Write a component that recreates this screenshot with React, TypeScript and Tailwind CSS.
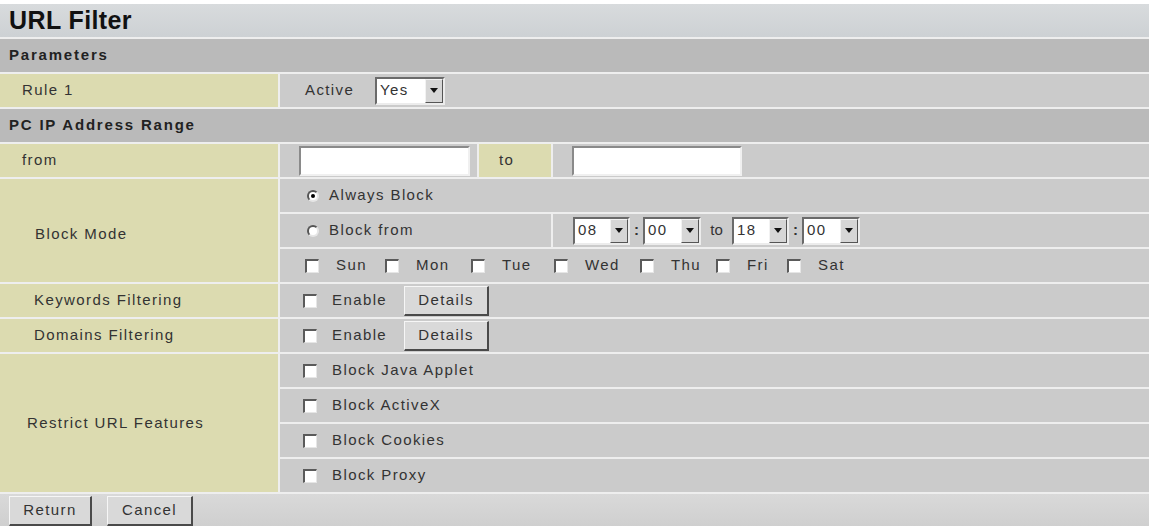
import React from 'react';

const Checkbox = () => (
  <span className="inline-block w-[14px] h-[14px] shrink-0 bg-white border-t-2 border-l-2 border-t-[#5a5a5a] border-l-[#5a5a5a] border-r border-b border-r-[#e6e6e6] border-b-[#e6e6e6]" />
);

const Radio = ({ checked = false }: { checked?: boolean }) => (
  <span className="inline-flex items-center justify-center w-[12px] h-[12px] shrink-0 rounded-full bg-white border-2 border-t-[#555] border-l-[#555] border-r-[#e6e6e6] border-b-[#e6e6e6]">
    {checked && <span className="w-[4px] h-[4px] rounded-full bg-black" />}
  </span>
);

const Arrow = () => (
  <span className="flex items-center justify-center w-[18px] h-full bg-[#d6d6d6] border-t border-l border-t-[#f2f2f2] border-l-[#f2f2f2] border-r border-b border-r-[#555] border-b-[#555]">
    <svg width="8" height="5" viewBox="0 0 8 5">
      <path d="M0 0h8L4 5z" fill="#111" />
    </svg>
  </span>
);

const Select = ({ value, className }: { value: string; className: string }) => (
  <div className={`flex items-stretch h-[28px] bg-white border-2 border-t-[#6a6a6a] border-l-[#6a6a6a] border-r-[#ececec] border-b-[#ececec] ${className}`}>
    <span className="flex-1 flex items-center pl-[3px]">{value}</span>
    <Arrow />
  </div>
);

const Button = ({ label, className }: { label: string; className: string }) => (
  <button
    type="button"
    className={`h-[30px] flex items-center justify-center bg-[#d9d9d9] border-t border-l border-t-[#f6f6f6] border-l-[#f6f6f6] border-r-2 border-b-2 border-r-[#4a4a4a] border-b-[#4a4a4a] text-[#333] ${className}`}
  >
    {label}
  </button>
);

const TextBox = ({ className }: { className: string }) => (
  <span className={`block h-[30px] bg-white border-2 border-t-[#8a8a8a] border-l-[#8a8a8a] border-r-[#f0f0f0] border-b-[#f0f0f0] ${className}`} />
);

const days = [
  { d: 'Sun', w: 'w-[80px]' },
  { d: 'Mon', w: 'w-[86px]' },
  { d: 'Tue', w: 'w-[83px]' },
  { d: 'Wed', w: 'w-[86px]' },
  { d: 'Thu', w: 'w-[76px]' },
  { d: 'Fri', w: 'w-[71px]' },
  { d: 'Sat', w: 'w-[60px]' },
];

const restrict = ['Block Java Applet', 'Block ActiveX', 'Block Cookies', 'Block Proxy'];

export default function App() {
  const left = 'bg-[#dcdbb0] flex items-center';
  const right = 'bg-[#cbcbcb] flex items-center';
  const header = 'col-span-4 flex items-center pl-[9px] bg-[#bababa] font-bold tracking-[1.8px] text-[#222]';

  return (
    <div className="w-[1151px] h-[526px] overflow-hidden bg-white pt-[4px] font-['Liberation_Sans',Arial,sans-serif] text-[15px] tracking-[1.4px] text-[#333]">
      <div className="grid w-[1149px] grid-cols-[278px_197px_72px_1fr] auto-rows-[33px] gap-[2px] bg-[#eeeeee]">
        {/* title */}
        <div className="col-span-4 flex items-center pl-[9px] bg-gradient-to-b from-[#d8dbdd] to-[#cdd1d4] text-[25px] font-bold tracking-[0.4px] text-[#111]">
          URL Filter
        </div>

        <div className={header}>Parameters</div>

        <div className={`${left} pl-[22px]`}>Rule 1</div>
        <div className={`${right} col-span-3 pl-[25px]`}>
          <span className="w-[70px]">Active</span>
          <Select value="Yes" className="w-[70px]" />
        </div>

        <div className={header}>PC IP Address Range</div>

        <div className={`${left} pl-[22px]`}>from</div>
        <div className={`${right} pl-[19px]`}>
          <TextBox className="w-[171px]" />
        </div>
        <div className={`${left} pl-[20px]`}>to</div>
        <div className={`${right} pl-[19px]`}>
          <TextBox className="w-[170px]" />
        </div>

        {/* block mode */}
        <div className={`${left} row-span-3 pl-[35px] pt-[8px]`}>Block Mode</div>
        <div className={`${right} col-span-3 pl-[27px] gap-[10px]`}>
          <Radio checked />
          <span>Always Block</span>
        </div>
        <div className={`${right} col-span-2 pl-[27px] gap-[10px]`}>
          <Radio />
          <span>Block from</span>
        </div>
        <div className={`${right} pl-[20px]`}>
          <Select value="08" className="w-[57px]" />
          <span className="w-[13px] text-center font-bold tracking-normal">:</span>
          <Select value="00" className="w-[58px]" />
          <span className="w-[31px] text-center tracking-normal">to</span>
          <Select value="18" className="w-[57px]" />
          <span className="w-[13px] text-center font-bold tracking-normal">:</span>
          <Select value="00" className="w-[58px]" />
        </div>
        <div className={`${right} col-span-3 pl-[25px]`}>
          {days.map((x) => (
            <span key={x.d} className={`flex items-center ${x.w}`}>
              <Checkbox />
              <span className="ml-[17px]">{x.d}</span>
            </span>
          ))}
        </div>

        {/* filtering */}
        <div className={`${left} pl-[34px]`}>Keywords Filtering</div>
        <div className={`${right} col-span-3 pl-[23px]`}>
          <Checkbox />
          <span className="ml-[15px] w-[72px]">Enable</span>
          <Button label="Details" className="w-[85px]" />
        </div>
        <div className={`${left} pl-[34px]`}>Domains Filtering</div>
        <div className={`${right} col-span-3 pl-[23px]`}>
          <Checkbox />
          <span className="ml-[15px] w-[72px]">Enable</span>
          <Button label="Details" className="w-[85px]" />
        </div>

        {/* restrict */}
        <div className={`${left} row-span-4 pl-[27px]`}>Restrict URL Features</div>
        {restrict.map((r) => (
          <div key={r} className={`${right} col-span-3 pl-[23px]`}>
            <Checkbox />
            <span className="ml-[15px]">{r}</span>
          </div>
        ))}

        <div className="col-span-4 flex items-center pl-[9px] bg-gradient-to-b from-[#d9d9d9] to-[#cfcfcf]">
          <Button label="Return" className="w-[83px]" />
          <Button label="Cancel" className="w-[86px] ml-[15px]" />
        </div>
      </div>
    </div>
  );
}
